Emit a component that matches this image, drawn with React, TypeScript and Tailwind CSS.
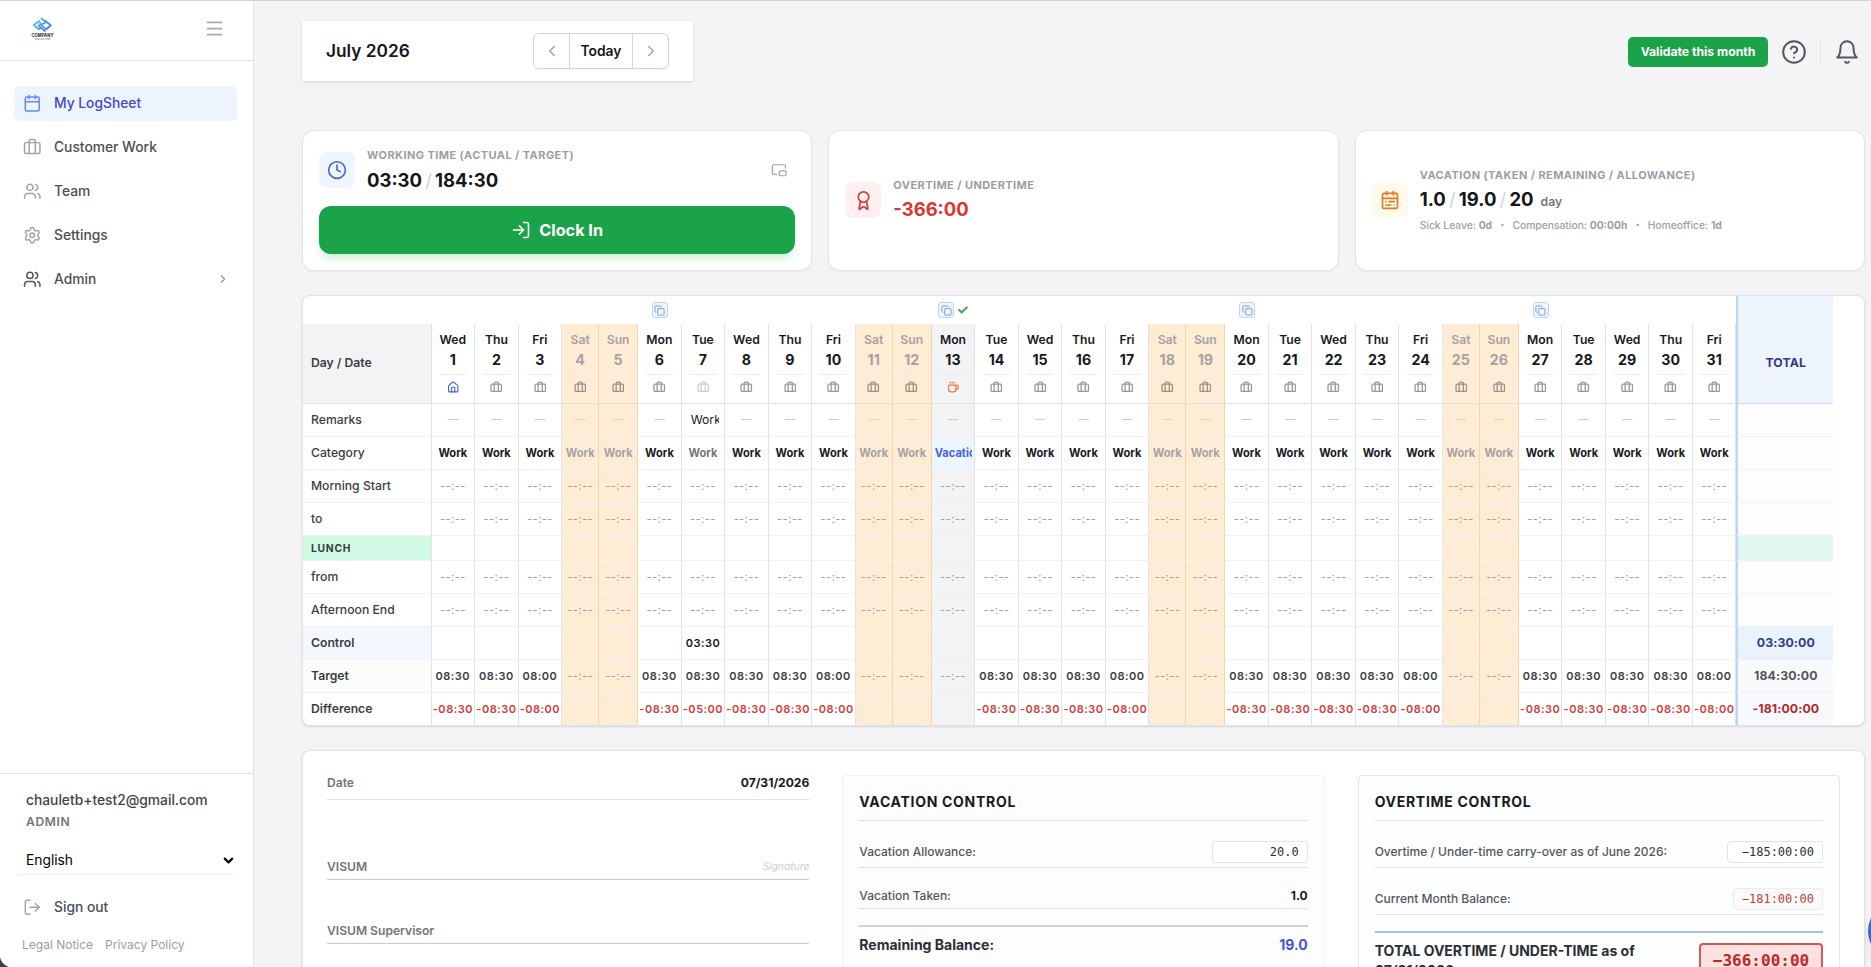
import type { ReactNode } from "react";
import clsx from "clsx";
import {
    Award,
    Briefcase,
    Calendar,
    CalendarRange,
    ChevronDown,
    ChevronLeft,
    ChevronRight,
    CircleHelp,
    Clock,
    Coffee,
    Copy,
    House,
    LogIn,
    LogOut,
    Menu,
    PictureInPicture2,
    Settings,
    Users,
} from "lucide-react";
import { FaCheck } from "react-icons/fa";

const WEEKDAYS = ["Mon", "Tue", "Wed", "Thu", "Fri", "Sat", "Sun"];

type Day = {
    date: number;
    name: string;
    weekend: boolean;
    holiday: boolean;
};

// July 2026 starts on a Wednesday
const DAYS: Day[] = Array.from({ length: 31 }, (_, i) => {
    const name = WEEKDAYS[(i + 2) % 7];
    return {
        date: i + 1,
        name,
        weekend: name === "Sat" || name === "Sun",
        holiday: i + 1 === 13,
    };
});

const EMPTY = "--:--";

const targetOf = (d: Day) => {
    if (d.weekend || d.holiday) return EMPTY;
    return d.name === "Fri" ? "08:00" : "08:30";
};

const differenceOf = (d: Day) => {
    if (d.weekend || d.holiday) return "";
    if (d.date === 7) return "-05:00";
    return d.name === "Fri" ? "-08:00" : "-08:30";
};

const dayWidth = (d: Day) =>
    d.name === "Sat" ? "w-[37px]" : d.name === "Sun" ? "w-[39px]" : "w-[43.53px]";

const dayColors = (d: Day) =>
    d.weekend
        ? "bg-[#ffecd4] border-r-[#f3d5aa]"
        : d.holiday
          ? "bg-[#f3f3f6] border-r-[#e2e3e6]"
          : "border-r-[#e2e3e6]";

/* === Sidebar === */

const Logo = () => (
    <svg width="25" height="25" viewBox="0 0 25 25" fill="none">
        <defs>
            <linearGradient id="logo" x1="4" y1="2" x2="20" y2="16" gradientUnits="userSpaceOnUse">
                <stop stopColor="#5fd0ee" />
                <stop offset="1" stopColor="#3f6fdc" />
            </linearGradient>
        </defs>
        <g stroke="url(#logo)" strokeWidth="1.8" strokeLinejoin="round">
            <path d="M10 4.5 3.8 9l5 4.3 2.8-2.5" />
            <path d="M11 1.8 16 6.5 8.4 9.6l7 6" />
            <path d="m14.5 4.3 6.3 4.9-5 4.3-6.3-7" />
        </g>
        <text x="12.5" y="21.3" textAnchor="middle" fontSize="4.2" fontWeight="700" fill="#1f2937" textLength="22">
            COMPANY
        </text>
        <text x="12.5" y="24" textAnchor="middle" fontSize="2" fill="#4b5563" textLength="16">
            TAGLINE HERE
        </text>
    </svg>
);

const NavItem = ({ icon, label, active, trailing }: { icon: ReactNode; label: string; active?: boolean; trailing?: ReactNode }) => (
    <div
        className={clsx(
            "flex h-[35px] items-center rounded-md pl-[9px] pr-2 text-[13.8px] font-medium",
            active ? "bg-[#edf4fe] text-[#4149c4]" : "text-[#4b4e55]",
        )}
    >
        {icon}
        <span className="ml-[12.5px] flex-1">{label}</span>
        {trailing}
    </div>
);

const Sidebar = () => (
    <aside className="flex w-[254px] shrink-0 flex-col border-r border-[#e2e3e6] bg-white">
        <div className="flex h-[61px] items-center justify-between border-b border-[#e2e3e6] pb-[3px] pl-[30px] pr-[28px]">
            <Logo />
            <Menu className="size-[21px] text-[#a6a9af]" strokeWidth={2} />
        </div>

        <nav className="flex flex-1 flex-col gap-[9px] pl-[14px] pr-4 pt-[24.5px]">
            <NavItem active label="My LogSheet" icon={<Calendar size={18.5} strokeWidth={2} className="text-[#5c8ff0]" />} />
            <NavItem label="Customer Work" icon={<Briefcase size={18.5} strokeWidth={1.9} className="text-[#a0a3a9]" />} />
            <NavItem label="Team" icon={<Users size={18.5} strokeWidth={1.9} className="text-[#a0a3a9]" />} />
            <NavItem label="Settings" icon={<Settings size={18.5} strokeWidth={1.9} className="text-[#a0a3a9]" />} />
            <NavItem
                label="Admin"
                icon={<Users size={18.5} strokeWidth={2} className="text-[#55585f]" />}
                trailing={<ChevronRight size={12} strokeWidth={2.4} className="text-[#8b8e95]" />}
            />
        </nav>

        <div className="h-[194px] border-t border-[#e2e3e6] px-[18px] pt-4">
            <div className="px-2">
                <p className="text-[13.8px] font-medium leading-[21px] text-[#3f4249]">chauletb+test2@gmail.com</p>
                <p className="mt-[2px] text-[12.1px] font-semibold leading-[17px] tracking-[0.6px] text-[#72757c]">ADMIN</p>
            </div>
            <div className="mt-4 flex h-[29px] items-center justify-between border-b border-[#eeeff1] pl-2 text-[13.8px] text-black">
                English
                <ChevronDown size={15} strokeWidth={3.4} className="mr-[-1px]" />
            </div>
            <div className="mt-[21px] flex h-[22px] items-center gap-[12.5px] pl-[5px] text-[13.8px] font-medium text-[#4b4e55]">
                <LogOut size={18.5} strokeWidth={1.8} className="text-[#a0a3a9]" />
                Sign out
            </div>
            <div className="mt-[18px] flex gap-3 pl-1 text-[12px] leading-[18px] text-[#9b9ea5]">
                <span>Legal Notice</span>
                <span>Privacy Policy</span>
            </div>
        </div>
    </aside>
);

/* === Top bar === */

const TopBar = () => (
    <div className="flex h-[60px] shrink-0 items-center">
        <div className="flex h-full w-[391px] items-center justify-between bg-white pl-6 pr-6 shadow-sm">
            <h1 className="text-[17.3px] font-semibold text-[#14161c]">July 2026</h1>
            <div className="flex h-9 w-[136px] items-center rounded-md border border-[#d3d5d9] bg-white shadow-xs">
                <div className="flex w-[35px] justify-center">
                    <ChevronLeft size={18} className="text-[#9b9ea5]" strokeWidth={1.8} />
                </div>
                <div className="flex h-full flex-1 items-center justify-center border-x border-[#d3d5d9] text-[13.8px] font-semibold text-[#14161c]">
                    Today
                </div>
                <div className="flex w-[35px] justify-center">
                    <ChevronRight size={18} className="text-[#9b9ea5]" strokeWidth={1.8} />
                </div>
            </div>
        </div>

        <div className="ml-auto flex items-center pr-[5px] pt-[2px] text-[#53565d]">
            <div className="flex h-[30px] w-[140px] items-center justify-center rounded-[5px] bg-[#1ba34a] text-[12.2px] font-bold text-white">
                Validate this month
            </div>
            <CircleHelp size={26} strokeWidth={1.8} className="ml-[13px]" />
            <div className="ml-[13px] mr-[13px] h-[25px] w-px bg-[#e6e7ea]" />
            <svg width="26" height="26" viewBox="0 0 24 24" fill="none" stroke="currentColor" strokeWidth="1.8" strokeLinecap="round" strokeLinejoin="round">
                <path d="M18 8A6 6 0 0 0 6 8c0 7-3 9-3 9h18s-3-2-3-9" />
                <path d="M13.73 21a2 2 0 0 1-3.46 0" />
            </svg>
        </div>
    </div>
);

/* === Summary cards === */

const Slash = () => <span className="mx-[3.2px] font-normal text-[#cfd1d6]">/</span>;

const StatLabel = ({ children }: { children: ReactNode }) => (
    <p className="text-[11px] font-bold uppercase leading-[16px] tracking-[0.42px] text-[#9b9ea5]">{children}</p>
);

const StatCards = () => (
    <div className="mt-[49px] grid h-[141px] shrink-0 grid-cols-3 gap-4">
        {/* Working time */}
        <div className="rounded-xl border border-[#e4e5e8] bg-white px-4 pt-[15px] shadow-xs">
            <div className="flex h-[50px] items-center">
                <div className="mt-[-2px] flex size-9 items-center justify-center rounded-lg bg-[#eff6ff]">
                    <Clock size={20} strokeWidth={1.9} className="text-[#4a62dc]" />
                </div>
                <div className="ml-3 mt-[-2px]">
                    <StatLabel>Working Time (Actual / Target)</StatLabel>
                    <p className="mt-[3px] text-[18.5px] font-bold leading-[28px] text-[#14161c]">
                        03:30
                        <Slash />
                        184:30
                    </p>
                </div>
                <PictureInPicture2 size={16.5} strokeWidth={1.8} className="ml-auto mr-2 mt-[-2px] text-[#a0a3a9]" />
            </div>
            <div className="mt-[10px] flex h-12 items-center justify-center gap-2 rounded-xl bg-[#1ba34a] text-[16.2px] font-bold text-white shadow-[0_6px_10px_-2px_#c9ecd3]">
                <LogIn size={20} strokeWidth={1.9} />
                Clock In
            </div>
        </div>

        {/* Overtime */}
        <div className="flex items-center rounded-xl border border-[#e4e5e8] bg-white px-4 pb-px shadow-xs">
            <div className="flex size-9 items-center justify-center rounded-lg bg-[#fef0f0]">
                <Award size={21} strokeWidth={2} className="text-[#cf4038]" />
            </div>
            <div className="ml-3">
                <StatLabel>Overtime / Undertime</StatLabel>
                <p className="mt-[2px] text-[18.4px] font-bold leading-[28px] text-[#dc3530]">-366:00</p>
            </div>
        </div>

        {/* Vacation */}
        <div className="flex items-center rounded-xl border border-[#e4e5e8] bg-white px-4 pb-px shadow-xs">
            <div className="flex size-9 items-center justify-center rounded-lg bg-[#fffaea]">
                <CalendarRange size={20} strokeWidth={2} className="text-[#df7b26]" />
            </div>
            <div className="ml-[12px]">
                <StatLabel>Vacation (Taken / Remaining / Allowance)</StatLabel>
                <p className="mt-[2px] text-[18.5px] font-bold leading-[28px] text-[#14161c]">
                    1.0
                    <Slash />
                    19.0
                    <Slash />
                    20
                    <span className="ml-[7px] text-[12.2px] font-semibold text-[#72757c]">day</span>
                </p>
                <p className="mt-px flex items-center text-[10.3px] font-medium leading-[16px] text-[#9b9ea5]">
                    <span>Sick Leave: <b className="font-bold">0d</b></span>
                    <span className="mx-[8.3px] text-[7px]">•</span>
                    <span>Compensation: <b className="font-bold">00:00h</b></span>
                    <span className="mx-[8.3px] text-[7px]">•</span>
                    <span>Homeoffice: <b className="font-bold">1d</b></span>
                </p>
            </div>
        </div>
    </div>
);

/* === Log sheet === */

const DayIcon = ({ day }: { day: Day }) => {
    if (day.date === 1) return <House size={12.5} strokeWidth={2.2} className="text-[#4a62dc]" />;
    if (day.holiday) return <Coffee size={12.5} strokeWidth={2.4} className="text-[#ef7a45]" />;
    return (
        <Briefcase
            size={12.5}
            strokeWidth={2.5}
            className={day.weekend ? "text-[#a08f86]" : day.date === 7 ? "text-[#ccced2]" : "text-[#95989e]"}
        />
    );
};

const SheetRow = ({
    label,
    labelClass = "font-medium",
    rowClass = "h-[33px]",
    total,
    totalClass = "bg-[#fdfdfd]",
    cell,
}: {
    label: string;
    labelClass?: string;
    rowClass?: string;
    total?: string;
    totalClass?: string;
    cell: (day: Day) => ReactNode;
}) => (
    <div className={clsx("flex", rowClass)}>
        <div className={clsx("flex w-[128.6px] shrink-0 items-center border-b border-r border-b-[#f0f1f3] border-r-[#e2e3e6] pl-2 text-[#3a3d44]", rowClass === "h-[33px]" && "text-[12.2px]", labelClass)}>
            {label}
        </div>
        {DAYS.map((day) => (
            <div
                key={day.date}
                className={clsx(
                    "flex shrink-0 items-center justify-center border-b border-r border-b-[#f0f1f3]",
                    dayWidth(day),
                    dayColors(day),
                )}
            >
                {cell(day)}
            </div>
        ))}
        <div className={clsx("flex w-[96.7px] shrink-0 items-center justify-center border-b border-l-2 border-b-[#f0f1f3] border-l-[#b9d7fb] text-[12.3px] font-bold tracking-[0.1px]", totalClass)}>
            {total}
        </div>
    </div>
);

const Time = ({ value, className = "text-[#3a3d44]" }: { value: string; className?: string }) =>
    value === EMPTY ? (
        <span className="whitespace-nowrap text-[11.3px] tracking-[0.35px] text-[#9fa1a7]">{value}</span>
    ) : (
        <span className={clsx("whitespace-nowrap text-[11px] font-semibold tracking-[0.5px]", className)}>{value}</span>
    );

const LogSheet = () => {
    const emptyTime = () => <Time value={EMPTY} />;

    return (
        <div className="mt-6 h-[431px] shrink-0 overflow-hidden rounded-lg border border-[#e2e3e6] bg-white shadow-sm">
            {/* Copy-week strip */}
            <div className="flex h-7">
                <div className="w-[128.6px] shrink-0" />
                {DAYS.map((day) => (
                    <div key={day.date} className={clsx("flex shrink-0 items-center justify-center gap-1", dayWidth(day))}>
                        {day.name === "Mon" && (
                            <div className="flex size-4 shrink-0 items-center justify-center rounded-[3px] border border-[#bcd6fa] bg-[#eff6ff]">
                                <Copy size={11} strokeWidth={2.1} className="text-[#7f97e8]" />
                            </div>
                        )}
                        {day.holiday && <FaCheck size={10} className="shrink-0 text-[#3f9f56]" />}
                    </div>
                ))}
                <div className="w-[96.7px] shrink-0 border-l-2 border-[#b9d7fb] bg-[#edf4fe]" />
            </div>

            {/* Day header */}
            <div className="flex h-20">
                <div className="flex w-[128.6px] shrink-0 items-center border-b border-r border-[#dfe0e4] bg-[#f3f3f5] pl-2 text-[12.2px] font-semibold text-[#3a3d44]">
                    Day / Date
                </div>
                {DAYS.map((day) => (
                    <div
                        key={day.date}
                        className={clsx(
                            "flex shrink-0 flex-col items-center border-b border-r border-b-[#dfe0e4] px-2 pt-[7px]",
                            dayWidth(day),
                            dayColors(day),
                            day.weekend ? "text-[#a7a1a4]" : "text-[#17191e]",
                        )}
                    >
                        <span className="text-[12.2px] font-semibold leading-[18px]">{day.name}</span>
                        <span className="text-[14.2px] font-bold leading-[21px]">{day.date}</span>
                        <div className="mt-[4px] flex w-full justify-center border-t border-[#ebecef] pt-[6px]">
                            <DayIcon day={day} />
                        </div>
                    </div>
                ))}
                <div className="flex w-[96.7px] shrink-0 items-center justify-center border-b border-l-2 border-b-[#d5dbe8] border-l-[#b9d7fb] bg-[#edf4fe] text-[12.2px] font-bold tracking-[0.2px] text-[#2f3a8c]">
                    TOTAL
                </div>
            </div>

            <SheetRow
                label="Remarks"
                cell={(day) =>
                    day.date === 7 ? (
                        <span className="mx-[5px] w-full overflow-hidden pl-1 text-[12.2px] text-[#17191e]">Work</span>
                    ) : (
                        <span className={clsx("text-[10.3px]", day.weekend ? "text-[#dccfc4]" : "text-[#c0c2c7]")}>—</span>
                    )
                }
            />
            <SheetRow
                label="Category"
                cell={(day) =>
                    day.holiday ? (
                        <span className="flex h-full w-full items-center overflow-hidden bg-[#edf5ff] pl-[3px] pr-[2px] text-[11.1px] font-bold text-[#4560e6]">
                            <span className="overflow-hidden">Vacation</span>
                        </span>
                    ) : (
                        <span
                            className={clsx(
                                "text-[11.1px] font-bold",
                                day.weekend ? "text-[#a7a1a4]" : day.date === 7 ? "text-[#72757c]" : "text-[#17191e]",
                            )}
                        >
                            Work
                        </span>
                    )
                }
            />
            <SheetRow label="Morning Start" cell={emptyTime} />
            <SheetRow label="to" cell={emptyTime} />
            <SheetRow
                label="LUNCH"
                rowClass="h-[25px]"
                labelClass="bg-[#d1fae5] pt-[2px] text-[10.3px] font-bold tracking-[0.75px] text-[#2c6350]"
                totalClass="bg-[#e2f6f1]"
                cell={() => null}
            />
            <SheetRow label="from" cell={emptyTime} />
            <SheetRow label="Afternoon End" cell={emptyTime} />
            <SheetRow
                label="Control"
                labelClass="bg-[#f5f7fe] font-semibold"
                total="03:30:00"
                totalClass="bg-[#eaf2fe] text-[#2f3a8c]"
                cell={(day) => (day.date === 7 ? <Time value="03:30" className="text-[#17191e]" /> : null)}
            />
            <SheetRow
                label="Target"
                labelClass="bg-[#fcfcfd] font-semibold"
                total="184:30:00"
                totalClass="bg-[#f9fafb] text-[#53565d]"
                cell={(day) => <Time value={targetOf(day)} />}
            />
            <SheetRow
                label="Difference"
                labelClass="font-semibold"
                total="-181:00:00"
                totalClass="bg-[#f8f9fd] text-[#b3282a]"
                cell={(day) => <Time value={differenceOf(day)} className="text-[#d1403a]" />}
            />
        </div>
    );
};

/* === Month summary === */

const Summary = () => (
    <div className="mt-6 grid h-[300px] shrink-0 grid-cols-3 gap-[33px] rounded-lg border border-[#e2e3e6] bg-white px-6 pt-6 shadow-sm">
        <div className="text-[12.1px] font-semibold text-[#72757c]">
            <div className="flex h-[25px] justify-between border-b border-[#e2e3e6] leading-[15px]">
                <span>Date</span>
                <span className="font-bold text-[#17191e]">07/31/2026</span>
            </div>
            <div className="mt-[55px] flex h-[25px] items-center justify-between border-b border-[#c9cbd0]">
                <span>VISUM</span>
                <span className="text-[10.3px] font-normal italic text-[#cbcdd2]">Signature</span>
            </div>
            <div className="mt-[39px] flex h-[25px] items-center border-b border-[#c9cbd0]">VISUM Supervisor</div>
        </div>

        {/* Vacation control */}
        <div className="rounded border border-[#f0f1f3] bg-[#fdfdfd] px-4 pt-[15px]">
            <h3 className="h-[30px] border-b border-[#e2e3e6] text-[14px] font-bold leading-[22px] tracking-[0.7px] text-[#17191e]">
                VACATION CONTROL
            </h3>
            <div className="mt-5 flex h-[27px] items-start justify-between border-b border-[#e2e3e6] text-[12px] text-[#53565d]">
                <span className="font-medium leading-[22px]">Vacation Allowance:</span>
                <span className="h-[22px] w-24 rounded border border-[#e2e3e6] bg-white pr-2 text-right font-['DejaVu_Sans_Mono',monospace] text-[12px] leading-[20px] text-[#2b2e35]">
                    20.0
                </span>
            </div>
            <div className="mt-5 flex h-[21px] items-start justify-between border-b border-[#e2e3e6] text-[12px] leading-[16px] text-[#53565d]">
                <span className="font-medium">Vacation Taken:</span>
                <span className="font-bold text-[#17191e]">1.0</span>
            </div>
            <div className="mt-4 flex justify-between border-t-2 border-[#cfd1d4] pt-[7px] text-[14px] font-bold leading-[21px] text-[#2b2e35]">
                <span>Remaining Balance:</span>
                <span className="text-[#4455cc]">19.0</span>
            </div>
        </div>

        {/* Overtime control */}
        <div className="rounded border border-[#e2e5ea] bg-[#fcfeff] px-4 pt-[15px]">
            <h3 className="h-[30px] border-b border-[#e2e3e6] text-[14px] font-bold leading-[22px] tracking-[0.7px] text-[#17191e]">
                OVERTIME CONTROL
            </h3>
            <div className="mt-5 flex h-[27px] items-start justify-between border-b border-[#e2e3e6] text-[12px] text-[#53565d]">
                <span className="font-medium leading-[22px]">Overtime / Under-time carry-over as of June 2026:</span>
                <span className="h-[22px] w-24 rounded border border-[#e2e3e6] bg-white pr-2 text-right font-['DejaVu_Sans_Mono',monospace] text-[12px] leading-[20px] text-[#2b2e35]">
                    −185:00:00
                </span>
            </div>
            <div className="mt-5 flex h-[27px] items-start justify-between border-b border-[#e2e3e6] text-[12px] text-[#53565d]">
                <span className="font-medium leading-[22px]">Current Month Balance:</span>
                <span className="h-[22px] w-[90px] rounded border border-[#ececee] bg-[#fafafa] pr-2 text-right font-['DejaVu_Sans_Mono',monospace] text-[12px] leading-[20px] text-[#c63a36]">
                    −181:00:00
                </span>
            </div>
            <div className="mt-4 flex items-start justify-between border-t-2 border-[#a3c4e4] pt-2 text-[14px] font-bold leading-[20px] text-[#2b2e35]">
                <span className="w-[280px]">TOTAL OVERTIME / UNDER-TIME as of 07/31/2026:</span>
                <span className="mt-[2px] h-[36px] w-[124px] rounded border-2 border-[#cf5b57] bg-[#fde0e0] text-center font-['DejaVu_Sans_Mono',monospace] text-[16px] leading-[31px] text-[#bb2a2a]">
                    −366:00:00
                </span>
            </div>
        </div>
    </div>
);

const App = () => {
    return (
        <div className="relative flex h-[967px] w-[1871px] overflow-hidden bg-[#f4f4f6] font-['Inter',sans-serif]">
            <Sidebar />
            <main className="flex flex-1 flex-col pl-12 pr-[6px] pt-[21px]">
                <TopBar />
                <StatCards />
                <LogSheet />
                <Summary />
            </main>

            {/* Window edges and chat bubble */}
            <div className="absolute inset-x-0 top-0 h-px bg-[#d3d3d6]" />
            <svg className="absolute bottom-0 left-0" width="10" height="10" viewBox="0 0 10 10">
                <path d="M0 0c1 5 4 8 9 10H0z" fill="#2f4a46" />
            </svg>
            <div className="absolute left-[1868px] top-[902px] size-[58px] rounded-full bg-[#3b5fe6] shadow-lg" />
        </div>
    );
};

export default App;
